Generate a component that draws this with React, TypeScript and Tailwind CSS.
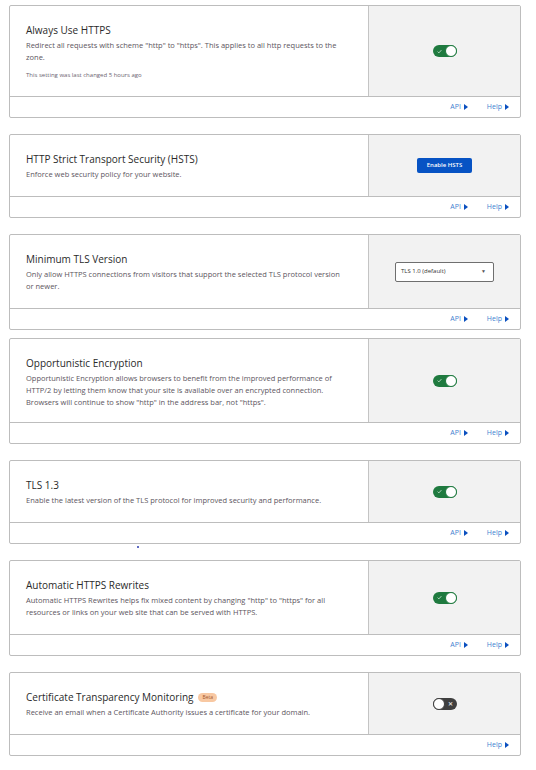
import type { ReactNode } from "react";

type Setting = {
  title: string;
  badge?: string;
  description: string;
  note?: string;
  control: ReactNode;
  api?: boolean;
};

function Toggle({ on }: { on: boolean }) {
  if (on) {
    return (
      <div className="relative flex h-[12px] w-[24px] items-center rounded-full bg-[#1f7a3f]">
        <svg viewBox="0 0 8 8" className="ml-[4px] h-[5px] w-[5px]" fill="none">
          <path d="M1 4.2 3 6.2 7 1.8" stroke="#cfe8d6" strokeWidth="1.3" />
        </svg>
        <div className="absolute right-0 top-0 h-[12px] w-[12px] rounded-full border-[1.5px] border-[#1f7a3f] bg-white" />
      </div>
    );
  }
  return (
    <div className="relative flex h-[12px] w-[24px] items-center justify-end rounded-full bg-[#3f3f3f]">
      <span className="mr-[4px] text-[6px] font-bold leading-none text-[#ddd]">✕</span>
      <div className="absolute left-0 top-0 h-[12px] w-[12px] rounded-full border-[1.5px] border-[#3f3f3f] bg-white" />
    </div>
  );
}

function Arrow() {
  return (
    <svg viewBox="0 0 4 6" className="ml-[3px] h-[6px] w-[4px]">
      <path d="M0 0 4 3 0 6Z" fill="#0a4fbf" />
    </svg>
  );
}

function Card({ s, gap, pb }: { s: Setting; gap: string; pb: string }) {
  return (
    <div className={`ml-[9px] w-[512px] rounded-[2px] border border-[#bdbdbd] bg-white ${gap}`}>
      <div className="flex">
        <div className={`w-[358px] pl-[16px] pr-[22px] pt-[17px] ${pb}`}>
          <div className="flex items-center gap-[5px] text-[10px] leading-[14px] text-[#2a2a2a]">
            {s.title}
            {s.badge ? (
              <span className="rounded-full bg-[#f8c8a2] px-[4px] text-[5px] leading-[9px] text-[#a3552b]">
                {s.badge}
              </span>
            ) : null}
          </div>
          <p className="mt-[2px] text-[7.5px] leading-[12px] text-[#5c5560]">{s.description}</p>
          {s.note ? <p className="mt-[7px] text-[6px] leading-[11px] text-[#6b6470]">{s.note}</p> : null}
        </div>
        <div className="flex flex-1 items-center justify-center border-l border-[#c4c4c4] bg-[#f2f2f2]">
          {s.control}
        </div>
      </div>
      <div className="flex h-[21px] items-center justify-end gap-[19px] border-t border-[#bdbdbd] pr-[11px] text-[7px] text-[#3f7fd0]">
        {s.api !== false ? (
          <span className="flex items-center">
            API
            <Arrow />
          </span>
        ) : null}
        <span className="flex items-center">
          Help
          <Arrow />
        </span>
      </div>
    </div>
  );
}

const settings: Setting[] = [
  {
    title: "Always Use HTTPS",
    description:
      'Redirect all requests with scheme "http" to "https". This applies to all http requests to the zone.',
    note: "This setting was last changed 5 hours ago",
    control: <Toggle on />,
  },
  {
    title: "HTTP Strict Transport Security (HSTS)",
    description: "Enforce web security policy for your website.",
    control: (
      <button className="h-[15px] w-[55px] rounded-[2px] bg-[#0753c4] text-[6px] font-semibold text-white">
        Enable HSTS
      </button>
    ),
  },
  {
    title: "Minimum TLS Version",
    description:
      "Only allow HTTPS connections from visitors that support the selected TLS protocol version or newer.",
    control: (
      <div className="flex h-[20px] w-[99px] items-center justify-between rounded-[2px] border border-[#6f6f6f] bg-white pl-[5px] pr-[7px] text-[6px] text-[#333]">
        TLS 1.0 (default)
        <span className="text-[5px] text-[#555]">▼</span>
      </div>
    ),
  },
  {
    title: "Opportunistic Encryption",
    description:
      'Opportunistic Encryption allows browsers to benefit from the improved performance of HTTP/2 by letting them know that your site is available over an encrypted connection. Browsers will continue to show "http" in the address bar, not "https".',
    control: <Toggle on />,
  },
  {
    title: "TLS 1.3",
    description: "Enable the latest version of the TLS protocol for improved security and performance.",
    control: <Toggle on />,
  },
  {
    title: "Automatic HTTPS Rewrites",
    description:
      'Automatic HTTPS Rewrites helps fix mixed content by changing "http" to "https" for all resources or links on your web site that can be served with HTTPS.',
    control: <Toggle on />,
  },
  {
    title: "Certificate Transparency Monitoring",
    badge: "Beta",
    description: "Receive an email when a Certificate Authority issues a certificate for your domain.",
    control: <Toggle on={false} />,
    api: false,
  },
];

const gaps = ["mt-[5px]", "mt-[16px]", "mt-[16px]", "mt-[8px]", "mt-[16px]", "mt-[16px]", "mt-[16px]"];
const pads = ["pb-[15px]", "pb-[16px]", "pb-[16px]", "pb-[14px]", "pb-[16px]", "pb-[16px]", "pb-[16px]"];

export default function App() {
  return (
    <div className="min-h-[770px] bg-white pb-[15px] font-['Open_Sans','Noto_Sans',sans-serif]">
      {settings.map((s, i) => (
        <div key={s.title} className="relative">
          <Card s={s} gap={gaps[i]} pb={pads[i]} />
          {i === 4 ? (
            <div className="absolute left-[137px] top-full mt-[2px] h-[2px] w-[2px] rounded-full bg-[#2b3bb0]" />
          ) : null}
        </div>
      ))}
    </div>
  );
}
